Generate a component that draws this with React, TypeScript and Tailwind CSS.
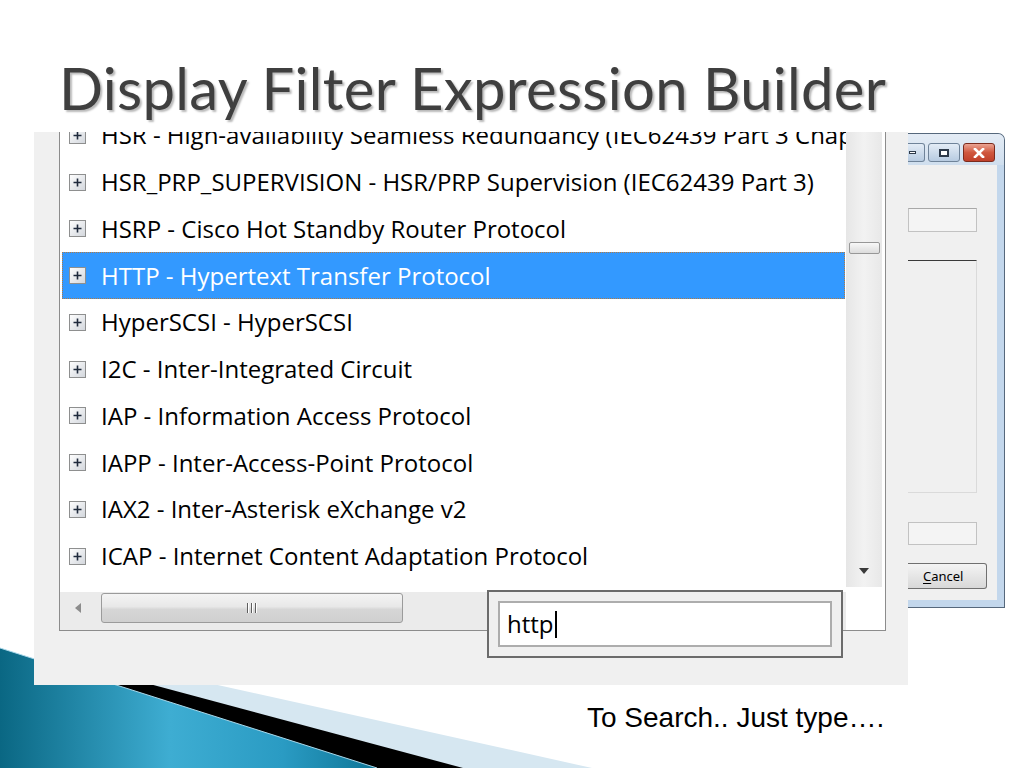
import React from 'react';

const rows = [
  'HSR - High-availability Seamless Redundancy (IEC62439 Part 3 Chapter 5)',
  'HSR_PRP_SUPERVISION - HSR/PRP Supervision (IEC62439 Part 3)',
  'HSRP - Cisco Hot Standby Router Protocol',
  'HTTP - Hypertext Transfer Protocol',
  'HyperSCSI - HyperSCSI',
  'I2C - Inter-Integrated Circuit',
  'IAP - Information Access Protocol',
  'IAPP - Inter-Access-Point Protocol',
  'IAX2 - Inter-Asterisk eXchange v2',
  'ICAP - Internet Content Adaptation Protocol',
];

const Expander = () => (
  <svg width="17" height="17" viewBox="0 0 17 17" className="shrink-0">
    <defs>
      <linearGradient id="expFill" x1="0" y1="0" x2="1" y2="1">
        <stop offset="0" stopColor="#ffffff" />
        <stop offset="1" stopColor="#d2d6dc" />
      </linearGradient>
    </defs>
    <rect x="0.5" y="0.5" width="16" height="16" fill="url(#expFill)" stroke="#8e8f8f" />
    <path d="M4.5 8.5h8M8.5 4.5v8" stroke="#1f2a3c" strokeWidth="1.6" />
  </svg>
);

// decoration in the slide's bottom left corner
const Corner = () => (
  <svg
    className="absolute bottom-0 left-0 z-0"
    width="620"
    height="140"
    viewBox="0 628 620 140"
  >
    <defs>
      <linearGradient id="teal" gradientUnits="userSpaceOnUse" x1="0" y1="700" x2="377" y2="700">
        <stop offset="0" stopColor="#0a6783" />
        <stop offset="0.45" stopColor="#3eadd2" />
        <stop offset="0.75" stopColor="#2a9bc3" />
        <stop offset="1" stopColor="#0e7596" />
      </linearGradient>
    </defs>
    <polygon points="60,650 592,768 60,768" fill="#d6e7f1" />
    <polygon points="34,653 463,768 34,768" fill="#000000" />
    <polygon points="0,648 377,768 0,768" fill="url(#teal)" />
    <line x1="0" y1="648" x2="377" y2="768" stroke="#a9d8ea" strokeWidth="1" />
  </svg>
);

const VScrollbar = () => (
  <div className="flex w-[39px] shrink-0 flex-col bg-white">
    <div className="flex h-[455px] w-[36px] flex-col items-center bg-[linear-gradient(to_right,#e6e6e6,#f2f2f2_50%,#e8e8e8)]">
      <div className="mt-[110px] h-[12px] w-[31px] rounded-[2px] border border-[#979797] bg-[linear-gradient(to_bottom,#f8f8f8,#dcdcdc)]" />
      <svg className="mt-auto mb-[13px]" width="10" height="6" viewBox="0 0 10 6">
        <path d="M0 0h10L5 6z" fill="#3a3a3a" />
      </svg>
    </div>
  </div>
);

const HScrollbar = () => (
  <div className="flex h-[38px] items-start bg-[#ebebeb] pt-[1px]">
    <div className="flex h-[30px] w-[41px] items-center pl-[15px]">
      <svg width="6" height="10" viewBox="0 0 6 10">
        <path d="M6 0v10L0 5z" fill="#8c8c8c" />
      </svg>
    </div>
    <div className="flex h-[30px] w-[302px] items-center justify-center gap-[2px] rounded-[3px] border border-[#9b9b9b] bg-[linear-gradient(to_bottom,#f4f4f4_0%,#e8e8e8_45%,#d6d6d6_55%,#d0d0d0_100%)]">
      <span className="h-[10px] w-[2px] border-l border-[#5e5e5e] bg-white" />
      <span className="h-[10px] w-[2px] border-l border-[#5e5e5e] bg-white" />
      <span className="h-[10px] w-[2px] border-l border-[#5e5e5e] bg-white" />
    </div>
  </div>
);

const ProtocolList = () => (
  <div className="flex h-[499px] w-[827px] border-r border-b border-l border-[#8c8c8c] bg-white">
    <div className="flex w-[786px] flex-col">
      <div className="h-[460px] overflow-hidden">
        <div className="-mt-[20px]">
          {rows.map((label, i) => {
            const selected = i === 3;
            return (
              <div
                key={label}
                className={
                  selected
                    ? 'ml-[2px] mr-[1px] flex h-[46.75px] items-center bg-[#3399ff] pl-[7px] text-white outline-1 -outline-offset-1 outline-dotted outline-[#b07a45]'
                    : 'ml-[2px] mr-[1px] flex h-[46.75px] items-center pl-[7px] text-black'
                }
              >
                <Expander />
                <span className="ml-[15px] whitespace-nowrap font-['Open_Sans',sans-serif] text-[24px] leading-none">
                  {label}
                </span>
              </div>
            );
          })}
        </div>
      </div>
      <HScrollbar />
    </div>
    <VScrollbar />
  </div>
);

const SearchPopup = () => (
  <div className="absolute left-[453px] top-[458px] z-20 h-[68px] w-[356px] border-2 border-[#6b6b6b] bg-[#f0f0f0] p-[9px]">
    <div className="flex h-full items-center border-2 border-[#adadad] bg-white pl-[7px]">
      <span className="font-['Open_Sans',sans-serif] text-[24px] leading-none text-black">http</span>
      <span className="ml-[1px] h-[27px] w-[2px] bg-black" />
    </div>
  </div>
);

const DialogEdge = () => (
  <div className="mt-px flex h-[475px] w-[97px] flex-col overflow-hidden rounded-tr-[7px] border-t border-r border-b border-[#56687c] bg-[#c3d7ec]">
    <div className="flex h-[31px] shrink-0 items-start bg-[linear-gradient(to_bottom,#e4ecf5,#cfdeee)] pt-[9px]">
      <div className="flex h-[19px] w-[17px] items-center rounded-r-[3px] border border-l-0 border-[#6f8399] bg-[linear-gradient(to_bottom,#e3ecf6,#b7cbe1)]">
        <span className="ml-[1px] h-[3px] w-[7px] border border-[#2d3a4a] bg-white" />
      </div>
      <div className="ml-[3px] flex h-[19px] w-[32px] items-center justify-center rounded-[3px] border border-[#6f8399] bg-[linear-gradient(to_bottom,#e3ecf6,#b7cbe1)]">
        <span className="h-[8px] w-[10px] border-2 border-[#2d3a4a] bg-white" />
      </div>
      <div className="ml-[3px] flex h-[19px] w-[32px] items-center justify-center rounded-[3px] border border-[#7b2b1d] bg-[linear-gradient(to_bottom,#eba493,#d0583f_50%,#c0402a)]">
        <svg width="12" height="10" viewBox="0 0 12 10">
          <path d="M2 1l8 8M10 1L2 9" stroke="#ffffff" strokeWidth="2.6" strokeLinecap="square" />
        </svg>
      </div>
    </div>
    <div className="flex min-h-0 flex-1">
      <div className="flex w-[89px] flex-col bg-[#f0f0f0] pt-[43px]">
        <div className="mr-[20px] h-[24px] border border-[#c2c2c2] border-t-[#a8a8a8] bg-[#f4f4f4]" />
        <div className="mt-[28px] mr-[20px] h-[233px] border-t border-r border-b border-t-[#3a3a3a] border-r-[#dadada] border-b-[#dadada]" />
        <div className="mt-[29px] mr-[20px] h-[23px] border border-[#c2c2c2] bg-[#f4f4f4]" />
        <div className="mt-[18px] mr-[10px] flex h-[26px] items-center rounded-r-[3px] border border-l-0 border-[#707070] bg-[linear-gradient(to_bottom,#f4f4f4,#e6e6e6_50%,#d8d8d8)] pl-[15px]">
          <span className="font-['Noto_Sans',sans-serif] text-[13px] leading-none text-black">
            <span className="underline underline-offset-2">C</span>ancel
          </span>
        </div>
      </div>
      <div className="w-[7px]" />
    </div>
    <div className="h-[7px] shrink-0" />
  </div>
);

export default function App() {
  return (
    <div className="relative h-[768px] w-[1024px] overflow-hidden bg-white">
      <Corner />

      <div className="relative z-10 h-[132px] pl-[59px] pt-[59px]">
        <h1 className="whitespace-nowrap font-['Lato',sans-serif] text-[58px] leading-none tracking-[0.3px] text-[#3f3f3f] [text-shadow:2px_2px_2px_rgba(0,0,0,0.28)]">
          Display Filter Expression Builder
        </h1>
      </div>

      <div className="relative z-10 flex h-[553px] pl-[34px]">
        <div className="relative h-[553px] w-[874px] bg-[#f0f0f0] pl-[25px]">
          <ProtocolList />
          <SearchPopup />
        </div>
        <DialogEdge />
      </div>

      <p className="relative z-10 mt-[19px] pl-[587px] font-['Liberation_Sans',Arial,sans-serif] text-[28px] leading-none text-black">
        To Search.. Just type….
      </p>
    </div>
  );
}
